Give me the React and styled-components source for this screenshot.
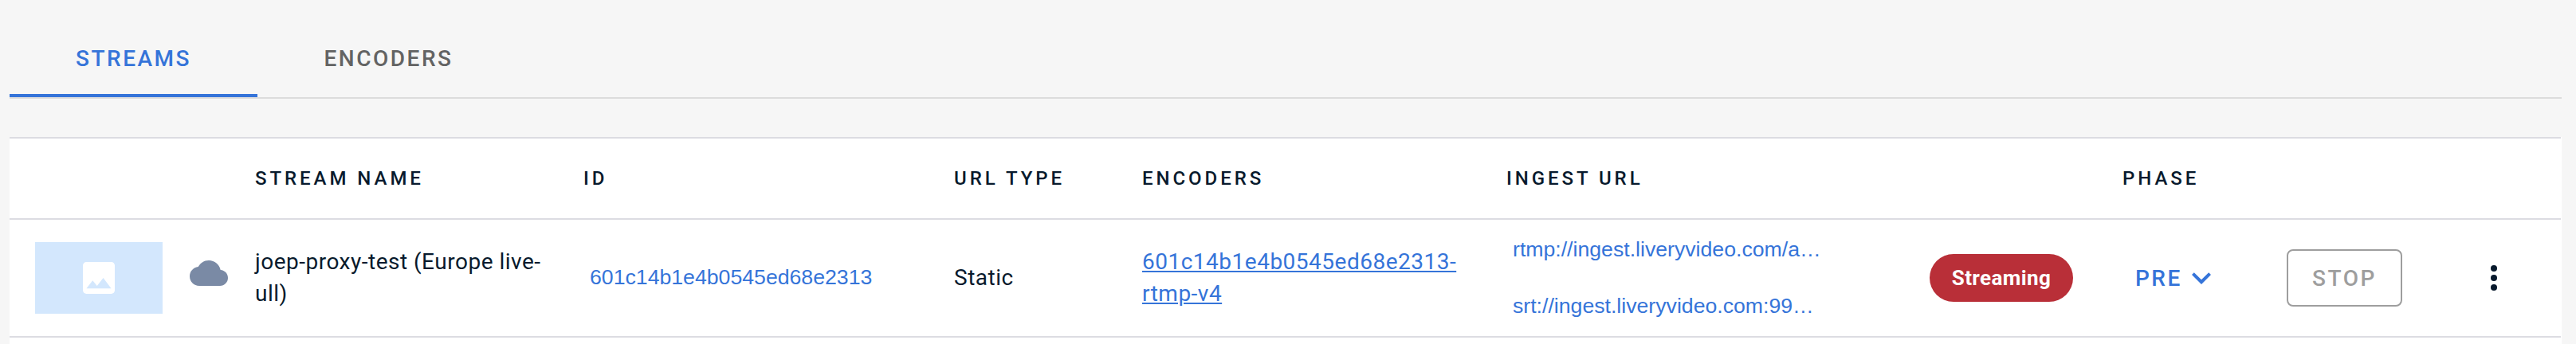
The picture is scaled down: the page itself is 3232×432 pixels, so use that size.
import React from "react";
import styled, { createGlobalStyle } from "styled-components";

const GlobalStyle = createGlobalStyle`
  * { box-sizing: border-box; }
  body {
    margin: 0;
    background: #f6f6f6;
    color: #081a2d;
    font-family: Roboto, "Liberation Sans", sans-serif;
    font-size: 28px;
  }
  button { font: inherit; background: none; border: 0; padding: 0; margin: 0; }
`;

const Page = styled.main`
  height: 432px;
  padding: 26px 18px 0 12px;
  display: flex;
  flex-direction: column;
  overflow: hidden;
`;

const TabBar = styled.nav`
  display: flex;
  height: 98px;
  border-bottom: 2px solid #dcdcdc;
`;

const Tab = styled.button`
  width: ${(p) => p.$width}px;
  height: 96px;
  padding-top: ${(p) => (p.$active ? 2 : 0)}px;
  padding-bottom: ${(p) => (p.$active ? 0 : 2)}px;
  border-bottom: ${(p) => (p.$active ? "4px solid #3574d9" : "0")};
  color: ${(p) => (p.$active ? "#3574d9" : "#636363")};
  font-weight: 500;
  letter-spacing: 2.5px;
  text-transform: uppercase;
`;

const TablePanel = styled.section`
  margin-top: 48px;
  padding-right: 1px;
  flex: 1;
  background: #fff;
`;

const Row = styled.div`
  display: grid;
  grid-template-columns: 216px 92px 412px 465px 236px 457px 531px 242px 206px 236px 1fr;
  align-items: center;
  height: ${(p) => p.$height}px;
  border-bottom: 2px solid #dcdce2;
`;

const HeaderRow = styled(Row)`
  border-top: 2px solid #dcdce2;
`;

const HeaderCell = styled.div`
  font-size: 24px;
  font-weight: 500;
  letter-spacing: 3.95px;
  line-height: 32px;
  text-transform: uppercase;
  white-space: nowrap;
`;

const Cell = styled.div`
  padding-left: ${(p) => p.$inset || 0}px;
  letter-spacing: 0.5px;
  line-height: 40px;
`;

const Thumbnail = styled.div`
  display: flex;
  align-items: center;
  justify-content: center;
  width: 160px;
  height: 90px;
  margin-left: 32px;
  background: #d3e7fd;
`;

const Icon = styled.svg`
  display: block;
  flex: none;
  width: ${(p) => p.$size}px;
  height: ${(p) => p.$size}px;
  fill: ${(p) => p.$color};
`;

const StatusIconBox = styled.div`
  padding: 0 0 12px 10px;
`;

const StreamName = styled(Cell)`
  width: 370px;
`;

const EncoderLink = styled.a`
  color: #3574d9;
  text-decoration: underline;
  text-decoration-thickness: 2px;
  text-underline-offset: 2px;
`;

const CopyButton = styled.button`
  display: block;
  padding-bottom: 2px;
  color: #3574d9;
  font-family: "Liberation Sans", Arial, sans-serif;
  font-size: 26.667px;
  line-height: 30px;
  letter-spacing: 0;
  white-space: nowrap;
`;

const UrlList = styled.div`
  display: flex;
  flex-direction: column;
  align-items: flex-start;
  gap: 39px;
  padding-left: 8px;
`;

const Chip = styled.span`
  display: flex;
  align-items: center;
  justify-content: center;
  width: 180px;
  height: 60px;
  border-radius: 30px;
  background: #b92f38;
  color: #fff;
  font-size: 26px;
  font-weight: 700;
  letter-spacing: 0.4px;
`;

const PhaseButton = styled.button`
  display: flex;
  align-items: center;
  padding-left: 16px;
  color: #3574d9;
  font-weight: 500;
  letter-spacing: 2.5px;
`;

const StopButton = styled.button`
  display: block;
  width: 145px;
  height: 72px;
  border: 2px solid #9e9e9e;
  border-radius: 8px;
  color: #9e9e9e;
  font-weight: 500;
  letter-spacing: 2.5px;
`;

const headers = ["", "", "Stream name", "ID", "URL type", "Encoders", "Ingest URL", "", "Phase"];

export default function App() {
  return (
    <>
      <GlobalStyle />
      <Page>
        <TabBar>
          <Tab $active $width={311}>Streams</Tab>
          <Tab $width={329}>Encoders</Tab>
        </TabBar>
        <TablePanel>
          <HeaderRow $height={104}>
            {headers.map((label, i) => (
              <HeaderCell key={i}>{label}</HeaderCell>
            ))}
          </HeaderRow>
          <Row $height={148}>
            <Thumbnail>
              <Icon $size={40} $color="#fff" viewBox="3 3 18 18">
                <path d="M21 19V5c0-1.1-.9-2-2-2H5c-1.1 0-2 .9-2 2v14c0 1.1.9 2 2 2h14c1.1 0 2-.9 2-2zM8.5 13.5l2.5 3.01L14.5 12l4.5 6H5l3.5-4.5z" />
              </Icon>
            </Thumbnail>
            <StatusIconBox>
              <Icon $size={48} $color="#7a8aa5" viewBox="0 0 24 24">
                <path d="M19.35 10.04C18.67 6.59 15.64 4 12 4 9.11 4 6.6 5.64 5.35 8.04 2.34 8.36 0 10.91 0 14c0 3.31 2.69 6 6 6h13c2.76 0 5-2.24 5-5 0-2.64-2.05-4.78-4.65-4.96z" />
              </Icon>
            </StatusIconBox>
            <StreamName>joep-proxy-test (Europe live-ull)</StreamName>
            <Cell $inset={8}>
              <CopyButton>601c14b1e4b0545ed68e2313</CopyButton>
            </Cell>
            <Cell>Static</Cell>
            <Cell>
              <EncoderLink>601c14b1e4b0545ed68e2313-<br />rtmp-v4</EncoderLink>
            </Cell>
            <UrlList>
              <CopyButton>rtmp://ingest.liveryvideo.com/a…</CopyButton>
              <CopyButton>srt://ingest.liveryvideo.com:99…</CopyButton>
            </UrlList>
            <Chip>Streaming</Chip>
            <PhaseButton>
              PRE
              <Icon $size={48} $color="#3574d9" viewBox="0 0 24 24">
                <path d="M7.41 8.59 12 13.17l4.59-4.58L18 10l-6 6-6-6z" />
              </Icon>
            </PhaseButton>
            <StopButton>STOP</StopButton>
            <Icon $size={48} $color="#081a2d" viewBox="0 0 24 24">
              <circle cx="12" cy="6" r="2" />
              <circle cx="12" cy="12" r="2" />
              <circle cx="12" cy="18" r="2" />
            </Icon>
          </Row>
        </TablePanel>
      </Page>
    </>
  );
}
